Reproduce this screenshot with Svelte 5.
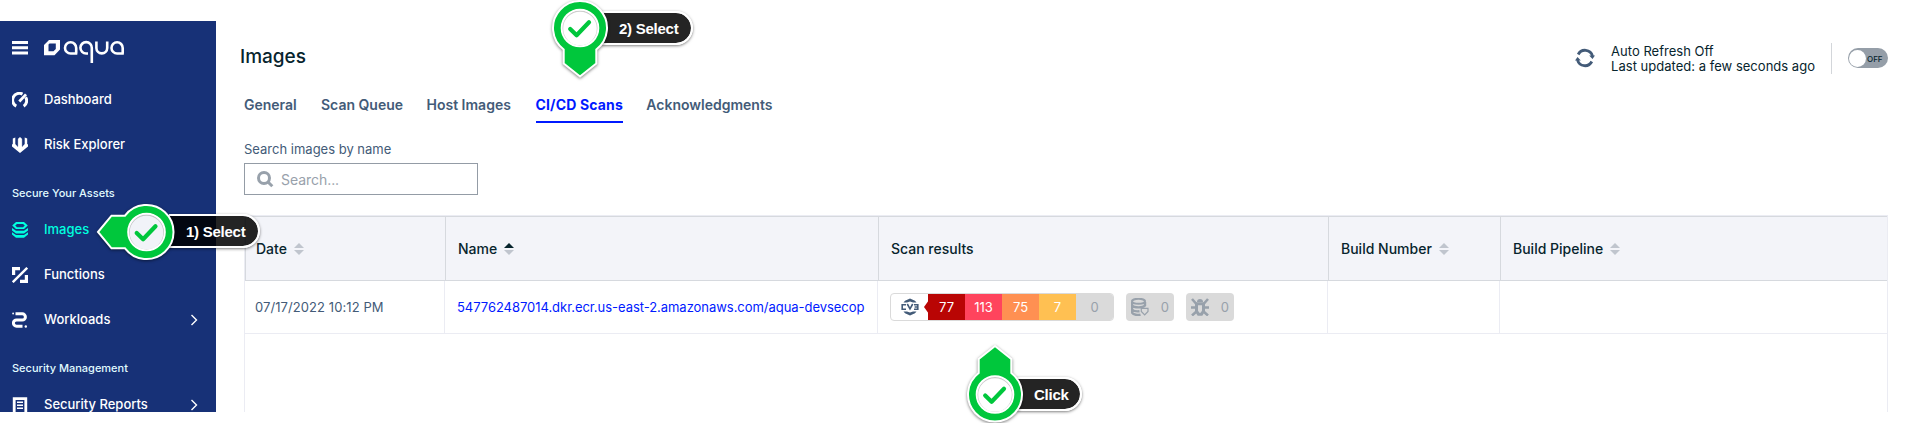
<script>
  const tabs = [
    { label: 'General', w: 77 },
    { label: 'Scan Queue', w: 105.5 },
    { label: 'Host Images', w: 109 },
    { label: 'CI/CD Scans', w: 110.8, active: true },
    { label: 'Acknowledgments', w: 130 }
  ];
  const columns = [
    { label: 'Date', sort: 'none' },
    { label: 'Name', sort: 'asc' },
    { label: 'Scan results' },
    { label: 'Build Number', sort: 'none' },
    { label: 'Build Pipeline', sort: 'none' }
  ];
  const severities = [
    { count: 77, kind: 'critical' },
    { count: 113, kind: 'high' },
    { count: 75, kind: 'medium' },
    { count: 7, kind: 'low' },
    { count: 0, kind: 'none' }
  ];
</script>

{#snippet tick(cx, cy, fill)}
  <circle {cx} {cy} r="18.6" {fill} />
  <circle {cx} cy={cy + 0.5} r="17.4" fill="none" stroke="#999" stroke-width="1.2" opacity=".5" />
  <circle {cx} {cy} r="18.4" fill="none" stroke="#fff" stroke-width="1.8" />
  <path d="M{cx - 9.8} {cy + 1}l6.4 6.3L{cx + 9} {cy - 5.8}" fill="none" stroke="#00c73c" stroke-width="4.2" stroke-linecap="round" stroke-linejoin="round" />
{/snippet}

<div class="page">
  <aside>
    <div class="brand">
      <svg width="16" height="14" viewBox="0 0 16 14"><path d="M0 1.6h16M0 6.8h16M0 12h16" stroke="#fff" stroke-width="3" /></svg>
      <svg class="logo" width="81" height="24" viewBox="0 0 81 24" fill="none" stroke="#fff">
        <path fill="#fff" stroke="none" fill-rule="evenodd" d="M5 0H16V9.500L10.500 15.300H0V5ZM4.500 4.500V11.300H9.500L11.800 9V3.500H5.500Z" />
        <path stroke-width="2.600" d="M32.200 13.500V8A5.600 5.600 0 1 0 26.700 13.500H33.300M47.800 23V8A5.700 5.700 0 1 0 42.200 13.500H44M52.400 1.500V8A5.400 5.400 0 0 0 63.200 8V1.500M78.700 13.500V8A5.600 5.600 0 1 0 73.200 13.500H79.800" />
      </svg>
    </div>
    <nav>
      <div class="item">
        <svg viewBox="0 0 16 16" fill="none" stroke="#fff"><path stroke-width="3" d="M4.300 14.200A6.500 6.500 0 0 1 10.500 2.100M13.600 5.200A6.500 6.500 0 0 1 11.700 14.200" /><path stroke-width="2.800" d="M7.300 9.500L14 2.400" /></svg>
        <span>Dashboard</span>
      </div>
      <div class="item">
        <svg viewBox="0 0 16 16" fill="#fff"><path d="M.8 1.500L3.300 .5V7L5.300 9.300V2.500L8 0L10.700 2.500V9.300L12.700 7V.5L15.200 1.500V7L16 7.500V9.500L8 16L0 9.500V7.500L.8 7Z" /><path d="M5.600 2V9.500M10.400 2V9.500" stroke="#173177" stroke-width=".9" /></svg>
        <span>Risk Explorer</span>
      </div>
      <h2>Secure Your Assets</h2>
      <div class="item current">
        <svg viewBox="0 0 16 16" fill="#00ffdf"><path fill-rule="evenodd" d="M4 0H12L15.800 3.600L12 7H4L.2 3.600ZM5 2L3.200 3.600L5 5.200H11L12.800 3.600L11 2Z" /><path d="M0 6L4 8.700H12L16 6V8.500L12 11.500H4L0 8.500ZM0 10.300L4 13H12L16 10.300V12.600L12 15.800H4L0 12.600Z" /></svg>
        <span>Images</span>
      </div>
      <div class="item">
        <svg viewBox="0 0 16 16" fill="none" stroke="#fff"><path stroke-width="3.200" d="M1.600 8V1.600H8M14.400 8V14.400H8" /><path stroke-width="2.400" d="M.8 15.200L15.200.8" /></svg>
        <span>Functions</span>
      </div>
      <div class="item">
        <svg viewBox="0 0 16 16" fill="none" stroke="#fff" stroke-width="3"><path d="M3.500 1.800H10.300A3.100 3.100 0 0 1 10.300 8H4.500A3 3 0 0 0 4.500 14.200H10.500M4.500 8H10" /><circle cx="1.100" cy="1.500" r=".9" fill="#fff" stroke="none" /><circle cx="13.800" cy="14.500" r="1.200" fill="#fff" stroke="none" /></svg>
        <span>Workloads</span>
        <svg class="chev" viewBox="0 0 8 12"><path d="M1.500 1L6.500 6L1.500 11" fill="none" stroke="#fff" stroke-width="1.400" /></svg>
      </div>
      <h2>Security Management</h2>
      <div class="item">
        <svg viewBox="0 0 16 16"><path d="M2.200 1.700H13.800V18H2.200Z" fill="none" stroke="#fff" stroke-width="2.800" /><path d="M5 5.200H11M5 8.200H11M5 11.200H11" stroke="#fff" stroke-width="1.400" /></svg>
        <span>Security Reports</span>
        <svg class="chev" viewBox="0 0 8 12"><path d="M1.500 1L6.500 6L1.500 11" fill="none" stroke="#fff" stroke-width="1.400" /></svg>
      </div>
    </nav>
  </aside>

  <main>
    <header>
      <h1>Images</h1>
      <div class="refresh">
        <svg width="20" height="20" viewBox="0 0 20 20"><path d="M3.200 6.500A7.700 7.700 0 0 1 17.500 8M16.800 13.500A7.700 7.700 0 0 1 2.500 12" fill="none" stroke="#435b78" stroke-width="2.800" /><path d="M14.200 7.500H20L17.500 11ZM5.800 12.500H0L2.500 9Z" fill="#435b78" /></svg>
        <p>Auto Refresh Off<br />Last updated: a few seconds ago</p>
        <div class="toggle"><i></i><b>OFF</b></div>
      </div>
    </header>

    <div class="tabs">
      {#each tabs as t}
        <div class="tab" style:width="{t.w}px"><span class:active={t.active}>{t.label}</span></div>
      {/each}
    </div>

    <div class="search">
      <label for="q">Search images by name</label>
      <div class="field">
        <svg width="17" height="17" viewBox="0 0 17 17" fill="none" stroke="#98a1ab" stroke-width="3"><circle cx="7" cy="7" r="5.500" /><path d="M10.500 10.500L15.300 15.300" /></svg>
        <input id="q" placeholder="Search..." />
      </div>
    </div>

    <section class="table">
      <div class="row head">
        {#each columns as c}
          <div class="cell">
            <span>{c.label}</span>
            {#if c.sort}
              <svg width="10" height="12" viewBox="0 0 10 12"><path d="M0 5L5 0L10 5Z" fill={c.sort === 'asc' ? '#07242d' : '#c0c5ce'} /><path d="M0 7L5 12L10 7Z" fill="#c0c5ce" /></svg>
            {/if}
          </div>
        {/each}
      </div>
      <div class="row body">
        <div class="cell date">07/17/2022 10:12 PM</div>
        <div class="cell link"><span>547762487014.dkr.ecr.us-east-2.amazonaws.com/aqua-devsecop</span></div>
        <div class="cell results">
          <div class="cve">
            <svg class="cveicon" width="38" height="26" viewBox="0 0 38 26">
              <path d="M12.500 8.500L14 6.800L19 4.500L24 6.800L25.500 8.500H22L19 7.500L16 8.500ZM12.500 17.500L14 19.200L19 21.500L24 19.200L25.500 17.500H22L19 18.500L16 17.500Z" fill="#435b78" />
              <path d="M15 10.700H11.200V15.300H15M16.300 10L19 14.800L21.700 10M23 10.700H26.800V15.300H23M23.600 13H26.800" fill="none" stroke="#435b78" stroke-width="1.600" />
              <path d="M38 6V20L33 13Z" fill="#b90504" />
            </svg>
            {#each severities as s}<span class={s.kind}>{s.count}</span>{/each}
          </div>
          <div class="pill">
            <svg width="18" height="18" viewBox="0 0 18 18"><ellipse cx="7.500" cy="3.300" rx="6.500" ry="2.500" fill="none" stroke="#98a1ab" stroke-width="2" /><path d="M1 4V14.500C2.500 17 7 17.300 9.500 16.600M14 4V8M1 7.500C3 10 12 10 14 7.500M1 11.500C3 13.500 6 13.600 8.500 13.300" fill="none" stroke="#98a1ab" stroke-width="2.400" /><path d="M10.300 10.300H17V13.500L13.700 17L10.300 13.500Z" fill="#dadada" stroke="#98a1ab" stroke-width="1.200" /></svg>
            <span>0</span>
          </div>
          <div class="pill">
            <svg width="18" height="18" viewBox="0 0 18 18"><path d="M6 4A3 3 0 0 1 12 4Z" fill="#98a1ab" /><path d="M1 1L5 5.500M17 1L13 5.500M0 9.500H5M18 9.500H13M1 17.500L5.500 13.500M17 17.500L12.500 13.500" stroke="#98a1ab" stroke-width="2.600" /><path d="M5.500 5.800H12.500V13L10.500 16.200H7.500L5.500 13Z" fill="none" stroke="#98a1ab" stroke-width="3" /></svg>
            <span>0</span>
          </div>
        </div>
        <div class="cell"></div>
        <div class="cell"></div>
      </div>
    </section>
  </main>

  <div class="callout first">
    <div class="label">1) Select</div>
    <svg width="84" height="64" viewBox="0 0 84 64"><path d="M5 32L18.500 15.700H32A27 27 0 1 1 32 48.300H18.500Z" fill="#00c73c" stroke="#fff" stroke-width="2" />{@render tick(53.5, 32, '#f1f3f8')}</svg>
  </div>
  <div class="callout top">
    <div class="label">2) Select</div>
    <svg width="64" height="84" viewBox="0 0 64 84"><path d="M32 76.500L15.700 63.500V49.500A27 27 0 1 1 48.300 49.500V63.500Z" fill="#00c73c" stroke="#fff" stroke-width="2" />{@render tick(32, 28, '#fff')}</svg>
  </div>
  <div class="callout bottom">
    <div class="label">Click</div>
    <svg width="64" height="84" viewBox="0 0 64 84"><path d="M32 5L48.300 18V32A27 27 0 1 1 15.700 32V18Z" fill="#00c73c" stroke="#fff" stroke-width="2" />{@render tick(32, 53.5, '#fff')}</svg>
  </div>
</div>

<style>
  :global(body) { margin: 0; background: #fff; }
  .page { position: relative; box-sizing: border-box; width: 1913px; height: 423px; padding: 21px 0 11px; display: flex; overflow: hidden; font: 14px/18px Inter, sans-serif; color: #07242d; }
  svg { display: block; flex: none; }
  aside { width: 216px; height: 391px; overflow: hidden; background: #173177; color: #fff; flex: none; }
  .brand { display: flex; padding: 20px 0 0 12px; gap: 16px; height: 36px; }
  .logo { margin-top: -1px; }
  .item { display: flex; align-items: center; height: 45px; padding: 0 18px 0 12px; font-size: 13px; line-height: 17px; font-weight: 500; }
  .item > svg:first-child { width: 16px; height: 16px; margin-right: 16px; }
  .item span { flex: 1; padding-bottom: 1px; }
  .item .chev { width: 8px; height: 12px; }
  .item.current { color: #00ffdf; }
  h2 { box-sizing: border-box; margin: 0; height: 40px; padding: 18px 12px 0; font-size: 11px; line-height: 16px; font-weight: 500; color: #e0fbff; letter-spacing: 0; }
  main { flex: 1; min-width: 0; height: 391px; display: flex; flex-direction: column; }
  header { display: flex; justify-content: space-between; height: 66px; padding: 0 25px 0 24px; }
  h1 { margin: 23px 0 0; font-size: 19px; line-height: 26px; font-weight: 500; }
  .refresh { display: flex; align-items: center; height: 74px; }
  .refresh p { margin: 2px 16px 0 16px; font-size: 13px; line-height: 15px; letter-spacing: .02px; }
  .toggle { display: flex; align-items: center; height: 31px; padding-left: 16px; border-left: 1px solid #d3d6da; position: relative; }
  .toggle::after { content: ''; width: 40px; height: 20px; border-radius: 10px; background: #959ea8; }
  .toggle i { position: absolute; left: 17px; top: 7px; width: 17px; height: 17px; border-radius: 50%; background: #fff; }
  .toggle b { position: absolute; left: 35px; top: 7px; font-size: 8px; font-weight: 500; letter-spacing: 0; }
  .tabs { display: flex; padding-left: 28px; height: 37px; }
  .tab { flex: none; }
  .tab span { display: inline-block; height: 34px; line-height: 36px; font-weight: 600; color: #435b78; white-space: nowrap; }
  .tab .active { color: #001aff; font-weight: 700; letter-spacing: .15px; border-bottom: 2px solid #001aff; }
  .search { height: 92px; padding-left: 28px; }
  .search label { display: block; padding-top: 16px; font-size: 13px; line-height: 18px; height: 23px; color: #435b78; }
  .field { box-sizing: border-box; width: 234px; height: 32px; border: 1px solid #949ca6; display: flex; align-items: center; padding-left: 12px; gap: 7px; }
  .field input { border: 0; padding: 0; width: 190px; outline: 0; background: none; font: 14px Inter, sans-serif; letter-spacing: -.05px; }
  .field input::placeholder { color: #98a1ab; opacity: 1; }
  .table { flex: 1; box-sizing: border-box; margin: -1px 25px 0 28px; border: solid #ebecf3; border-width: 1px 1px 0; }
  .row { display: grid; grid-template-columns: 200px 433px 450px 172px 1fr; }
  .head { box-sizing: border-box; height: 65px; border-top: 1px solid #d6d9de; border-bottom: 1px solid #d6d9de; background: #f3f4f9; font-weight: 500; }
  .cell { box-sizing: border-box; display: flex; align-items: center; padding-left: 10px; min-width: 0; }
  .head .cell { border-left: 1px solid #d6d9de; gap: 7px; padding-left: 12px; }
  .head .cell:first-child { padding-left: 10px; }
  .body { height: 52px; border-bottom: 1px solid #ebecf3; font-size: 13px; }
  .body .cell + .cell { border-left: 1px solid #ebecf3; margin-left: -1px; padding-left: 12px; }
  .date { color: #435b78; letter-spacing: .08px; }
  .link { color: #001aff; }
  .link span { white-space: nowrap; letter-spacing: -.04px; }
  .body .results { gap: 12px; }
  .cve { display: flex; box-sizing: border-box; height: 28px; width: 224px; border: 1px solid #dadada; border-radius: 4px; overflow: hidden; }
  .cveicon { margin-right: -1px; }
  .cve span { width: 37px; flex: none; line-height: 27px; text-align: center; color: #fff; }
  .critical { background: #b90504; }
  .high { background: #ff445d; }
  .medium { background: #ff9052; }
  .low { background: #ffc052; }
  .cve .none { background: #dadada; color: #98a1ab; }
  .pill { box-sizing: border-box; width: 48px; height: 28px; border-radius: 4px; padding: 0 5px; display: flex; align-items: center; justify-content: space-between; background: #dadada; color: #98a1ab; }
  .callout { position: absolute; }
  .callout svg { position: relative; filter: drop-shadow(0 1px 1.5px rgba(0, 0, 0, .5)); }
  .label { position: absolute; box-sizing: border-box; height: 34px; border: solid #fff; border-width: 2px 2px 2px 0; border-radius: 0 17px 17px 0; background: rgba(0, 0, 0, .86); background-clip: padding-box; box-shadow: 0 1px 3px rgba(0, 0, 0, .5); color: #fff; font: bold 15px/32px "Liberation Sans", sans-serif; letter-spacing: -.25px; white-space: nowrap; }
  .first { left: 93px; top: 199.5px; }
  .first .label { left: 76px; top: 14.5px; width: 91px; padding-left: 17px; }
  .top { left: 548px; top: 0; }
  .top .label { left: 54px; top: 11px; width: 91px; padding-left: 17px; }
  .bottom { left: 963px; top: 341px; }
  .bottom .label { left: 54px; top: 36px; width: 65px; padding-left: 17px; }
</style>
